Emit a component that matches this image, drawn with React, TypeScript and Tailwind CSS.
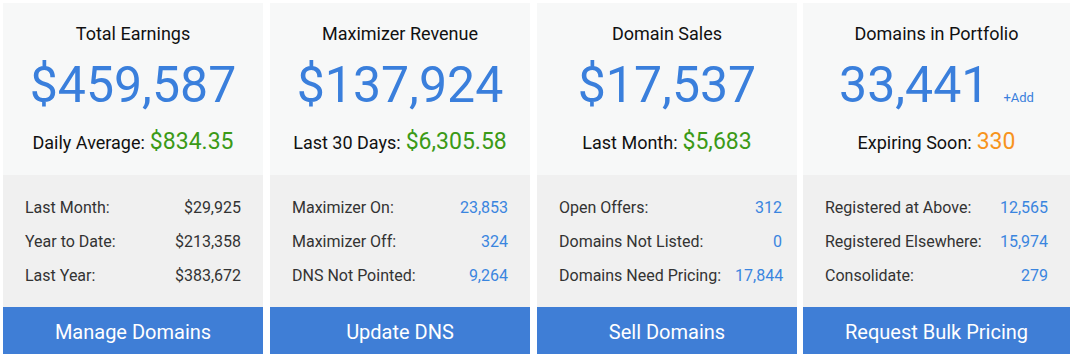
import React from "react";

type Row = { label: string; value: string };
type Card = {
  title: string;
  big: string;
  sub: string;
  subValue: string;
  subColor: string;
  rows: Row[];
  rowColor: string;
  button: string;
  add?: boolean;
  cls: string;
  rowsCls: string;
};

const cards: Card[] = [
  {
    title: "Total Earnings",
    big: "$459,587",
    sub: "Daily Average:",
    subValue: "$834.35",
    subColor: "text-[#3b9a17]",
    rows: [
      { label: "Last Month:", value: "$29,925" },
      { label: "Year to Date:", value: "$213,358" },
      { label: "Last Year:", value: "$383,672" },
    ],
    rowColor: "text-[#333333]",
    button: "Manage Domains",
    cls: "w-[260px]",
    rowsCls: "pl-[22px] pr-[22px]",
  },
  {
    title: "Maximizer Revenue",
    big: "$137,924",
    sub: "Last 30 Days:",
    subValue: "$6,305.58",
    subColor: "text-[#3b9a17]",
    rows: [
      { label: "Maximizer On:", value: "23,853" },
      { label: "Maximizer Off:", value: "324" },
      { label: "DNS Not Pointed:", value: "9,264" },
    ],
    rowColor: "text-[#3a85df]",
    button: "Update DNS",
    cls: "w-[260px] ml-[7px]",
    rowsCls: "pl-[22px] pr-[22px]",
  },
  {
    title: "Domain Sales",
    big: "$17,537",
    sub: "Last Month:",
    subValue: "$5,683",
    subColor: "text-[#3b9a17]",
    rows: [
      { label: "Open Offers:", value: "312" },
      { label: "Domains Not Listed:", value: "0" },
      { label: "Domains Need Pricing:", value: "17,844" },
    ],
    rowColor: "text-[#3a85df]",
    button: "Sell Domains",
    cls: "w-[260px] ml-[7px]",
    rowsCls: "pl-[22px] pr-[15px]",
  },
  {
    title: "Domains in Portfolio",
    big: "33,441",
    sub: "Expiring Soon:",
    subValue: "330",
    subColor: "text-[#f7941d]",
    rows: [
      { label: "Registered at Above:", value: "12,565" },
      { label: "Registered Elsewhere:", value: "15,974" },
      { label: "Consolidate:", value: "279" },
    ],
    rowColor: "text-[#3a85df]",
    button: "Request Bulk Pricing",
    add: true,
    cls: "w-[267px] ml-[6px]",
    rowsCls: "pl-[22px] pr-[22px]",
  },
];

function StatCard({ c }: { c: Card }) {
  return (
    <div className={`flex flex-col ${c.cls}`}>
      <div className="h-[172px] bg-[#f7f8f8] flex flex-col items-center pt-[19px]">
        <div className="text-[18px] leading-[24px] text-[#111111]">{c.title}</div>
        <div className="mt-[11px] flex items-baseline">
          <span className="text-[50px] leading-[56px] text-[#3a7fdc]">{c.big}</span>
          {c.add && (
            <span className="ml-[14px] text-[13px] text-[#3a7fdc]">+Add</span>
          )}
        </div>
        <div className="mt-[14px] flex items-baseline leading-[30px]">
          <span className="text-[18px] text-[#111111]">{c.sub}</span>
          <span className={`ml-[5px] text-[23px] ${c.subColor}`}>{c.subValue}</span>
        </div>
      </div>
      <div className={`h-[132px] bg-[#f0f0f0] pt-[16px] flex flex-col ${c.rowsCls}`}>
        {c.rows.map((r) => (
          <div
            key={r.label}
            className="h-[34px] flex items-center justify-between gap-[14px] text-[16px]"
          >
            <span className="text-[#333333] whitespace-nowrap">{r.label}</span>
            <span className={`whitespace-nowrap ${c.rowColor}`}>{r.value}</span>
          </div>
        ))}
      </div>
      <div className="h-[47px] bg-[#3f7ed6] flex items-center justify-center text-white text-[20px] pt-[2px]">
        {c.button}
      </div>
    </div>
  );
}

export default function App() {
  return (
    <div
      className="w-[1073px] h-[357px] bg-white pt-[3px] pl-[3px] flex"
      style={{ fontFamily: "Roboto, 'Liberation Sans', sans-serif" }}
    >
      {cards.map((c) => (
        <StatCard key={c.title} c={c} />
      ))}
    </div>
  );
}
